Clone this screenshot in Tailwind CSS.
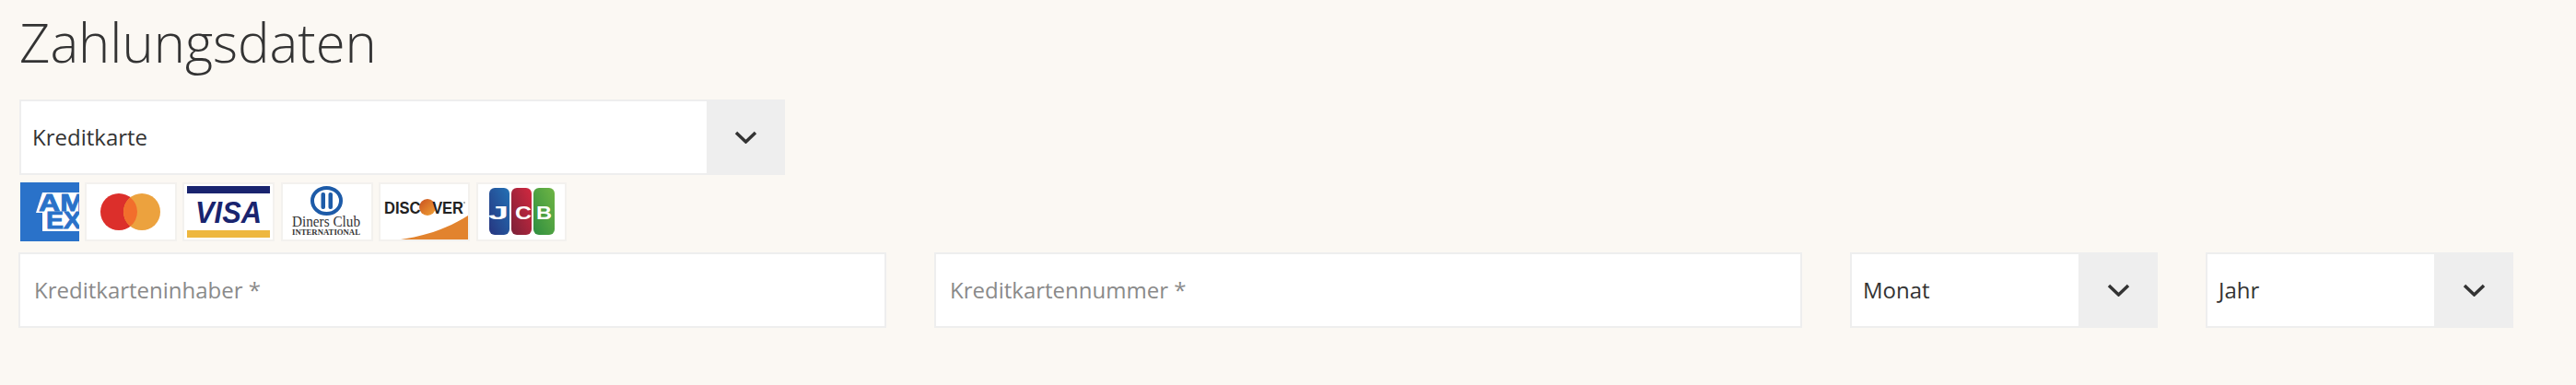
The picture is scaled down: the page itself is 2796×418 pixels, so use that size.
<!DOCTYPE html>
<html lang="de">
<head>
<meta charset="utf-8">
<title>Zahlungsdaten</title>
<script src="https://cdn.jsdelivr.net/npm/@tailwindcss/browser@4"></script>
</head>
<body class="bg-[#fbf8f3] font-['Open_Sans',sans-serif] text-[#333333]">
<div class="w-[2796px] h-[418px] overflow-hidden pl-[20px] pt-[8px]">
    <h2 class="ml-px text-[58px] leading-[76px] font-light text-[#333333]">Zahlungsdaten</h2>

    <!-- zahlungsart -->
    <div class="mt-[24px] ml-px flex w-[831px] h-[82px] border-2 border-[#eeeeee] bg-white">
        <div class="flex-1 flex items-center pl-[12px] text-[24px]">Kreditkarte</div>
        <div class="w-[85px] -mr-[2px] bg-[#eeeeee] flex items-center justify-center">
            <svg class="w-[25px] h-[14px]" viewBox="0 0 25 14" fill="none" stroke="#333333" stroke-width="3.500"><path d="M2 2l10.500 10L23 2"/></svg>
        </div>
    </div>

    <!-- karten -->
    <div class="mt-[8px] ml-[2px] flex gap-[6px] h-[64px]">
        <div class="w-[64px] h-[64px] bg-[#2a72c9] overflow-hidden">
            <svg width="64" height="64" viewBox="0 0 64 64">
                <path d="M24 11H64V53H24V33H17z" fill="#ffffff"/>
                <g font-family="'Liberation Sans',sans-serif" font-weight="700" font-size="25" fill="#2a72c9" stroke="#2a72c9" stroke-width="0.800">
                    <text x="20" y="31" textLength="50" lengthAdjust="spacingAndGlyphs">AM</text>
                    <text x="28" y="50" textLength="38" lengthAdjust="spacingAndGlyphs">EX</text>
                </g>
            </svg>
        </div>
        <div class="w-[100px] h-[64px] border-2 border-[#f3f1ee] bg-white">
            <svg width="96" height="60" viewBox="0 0 96 60">
                <circle cx="35" cy="30" r="20" fill="#dc2f2b"/>
                <circle cx="60" cy="30" r="20" fill="#eca23e"/>
                <path d="M47.500 14.400a20 20 0 0 1 0 31.200a20 20 0 0 1 0-31.200z" fill="#f26e2c"/>
            </svg>
        </div>
        <div class="w-[100px] h-[64px] border-2 border-[#f3f1ee] bg-white">
            <svg width="96" height="60" viewBox="0 0 96 60">
                <rect x="3" y="2" width="90" height="8" fill="#19246f"/>
                <rect x="3" y="50" width="90" height="8" fill="#eeb73f"/>
                <text x="12" y="42" textLength="72" lengthAdjust="spacingAndGlyphs" font-family="'Liberation Sans',sans-serif" font-style="italic" font-weight="700" font-size="33" fill="#19246f">VISA</text>
            </svg>
        </div>
        <div class="ml-[1px] w-[100px] h-[64px] border-2 border-[#f3f1ee] bg-white">
            <svg width="96" height="60" viewBox="0 0 96 60">
                <ellipse cx="47.500" cy="18" rx="15.500" ry="14" fill="none" stroke="#1d5ba8" stroke-width="4"/>
                <rect x="41.500" y="9" width="4.500" height="18" rx="2" fill="#1d5ba8"/>
                <rect x="49.500" y="9" width="4.500" height="18" rx="2" fill="#1d5ba8"/>
                <text x="10" y="46" textLength="74" lengthAdjust="spacingAndGlyphs" font-family="'Liberation Serif',serif" font-size="17" fill="#333333">Diners Club</text>
                <text x="10" y="55" textLength="74" lengthAdjust="spacingAndGlyphs" font-family="'Liberation Serif',serif" font-size="8" font-weight="700" fill="#333333">INTERNATIONAL</text>
            </svg>
        </div>
        <div class="w-[99px] h-[64px] border-2 border-[#f3f1ee] bg-white">
            <svg width="95" height="60" viewBox="0 0 95 60">
                <defs>
                    <linearGradient id="discoverO" x1="0" x2="1" y1="0" y2="1"><stop offset="0" stop-color="#c9501f"/><stop offset="1" stop-color="#f2a436"/></linearGradient>
                </defs>
                <path d="M22 60C50 56 75 47 95 34V60z" fill="#e2832e"/>
                <circle cx="51" cy="25" r="9" fill="url(#discoverO)"/>
                <circle cx="91" cy="20" r="1" fill="#999999"/>
                <text x="4" y="32" textLength="86" lengthAdjust="spacingAndGlyphs" font-family="'Liberation Sans',sans-serif" font-weight="700" font-size="19" fill="#222222">DISC<tspan fill="none">O</tspan>VER</text>
            </svg>
        </div>
        <div class="ml-[1px] w-[98px] h-[64px] border-2 border-[#f3f1ee] bg-white">
            <svg width="94" height="60" viewBox="0 0 94 60">
                <defs>
                    <linearGradient id="jcbBlue" x1="0" x2="1" y1="1" y2="0"><stop offset="0" stop-color="#27357f"/><stop offset="1" stop-color="#2371b5"/></linearGradient>
                    <linearGradient id="jcbRed" x1="0" x2="1" y1="1" y2="0"><stop offset="0" stop-color="#7b2138"/><stop offset="1" stop-color="#d2283f"/></linearGradient>
                    <linearGradient id="jcbGreen" x1="0" x2="1" y1="1" y2="0"><stop offset="0" stop-color="#2f8e40"/><stop offset="1" stop-color="#6fb544"/></linearGradient>
                </defs>
                <rect x="12" y="4" width="22" height="51" rx="6" fill="url(#jcbBlue)"/>
                <rect x="36" y="4" width="22" height="51" rx="6" fill="url(#jcbRed)"/>
                <rect x="60" y="4" width="23" height="51" rx="6" fill="url(#jcbGreen)"/>
                <g font-family="'Liberation Sans',sans-serif" font-weight="700" font-size="21" fill="#ffffff">
                    <text x="11" y="38" textLength="22" lengthAdjust="spacingAndGlyphs">J</text>
                    <text x="40" y="38" textLength="18" lengthAdjust="spacingAndGlyphs">C</text>
                    <text x="63" y="38" textLength="17" lengthAdjust="spacingAndGlyphs">B</text>
                </g>
            </svg>
        </div>
    </div>

    <!-- felder -->
    <div class="mt-[12px] flex h-[82px]">
        <div class="w-[942px] border-2 border-[#eeeeee] bg-white flex items-center pl-[15px] text-[24px] text-[#8a8a8a]">Kreditkarteninhaber *</div>
        <div class="ml-[52px] w-[942px] border-2 border-[#eeeeee] bg-white flex items-center pl-[15px] text-[24px] text-[#8a8a8a]">Kreditkartennummer *</div>
        <div class="ml-[52px] w-[334px] flex border-2 border-[#eeeeee] bg-white">
            <div class="flex-1 flex items-center pl-[12px] text-[24px]">Monat</div>
            <div class="w-[86px] -mr-[2px] bg-[#eeeeee] flex items-center justify-center">
                <svg class="w-[25px] h-[14px]" viewBox="0 0 25 14" fill="none" stroke="#333333" stroke-width="3.500"><path d="M2 2l10.500 10L23 2"/></svg>
            </div>
        </div>
        <div class="ml-[52px] w-[334px] flex border-2 border-[#eeeeee] bg-white">
            <div class="flex-1 flex items-center pl-[12px] text-[24px]">Jahr</div>
            <div class="w-[86px] -mr-[2px] bg-[#eeeeee] flex items-center justify-center">
                <svg class="w-[25px] h-[14px]" viewBox="0 0 25 14" fill="none" stroke="#333333" stroke-width="3.500"><path d="M2 2l10.500 10L23 2"/></svg>
            </div>
        </div>
    </div>
</div>
</body>
</html>
